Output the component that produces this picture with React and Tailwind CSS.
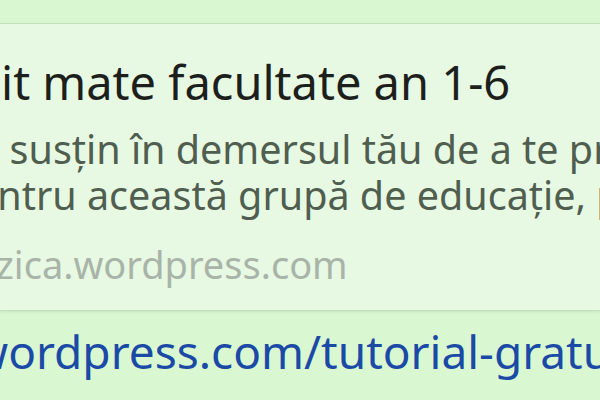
import React from "react";

function LinkPreview() {
  return (
    <div className="border-y border-[#c2dfbc] bg-[#e7f8e3] shadow-[0_1px_2px_rgba(0,0,0,0.08)] overflow-hidden">
      <div className="pt-[28px] pb-[24px]">
        <div className="whitespace-nowrap text-[47px] leading-[60px] text-[#1d1f1d] ml-[1px]">
          it mate facultate an 1-6
        </div>
        <div className="mt-[14px] whitespace-nowrap text-[39.5px] leading-[46px] text-[#4f5e4f] -ml-[23px]">
          e susțin în demersul tău de a te pregăti
        </div>
        <div className="whitespace-nowrap text-[39.5px] leading-[46px] text-[#4f5e4f] -ml-[25px]">
          entru această grupă de educație, pentru
        </div>
        <div className="mt-[24px] whitespace-nowrap text-[38px] leading-[44px] text-[#a9b4a8] -ml-[4px]">
          zica.wordpress.com
        </div>
      </div>
    </div>
  );
}

export default function App() {
  return (
    <div
      className="w-[600px] h-[400px] overflow-hidden bg-[#d9f8d1] flex flex-col"
      style={{ fontFamily: '"Noto Sans", "Open Sans", sans-serif' }}
    >
      <div className="h-[23px] shrink-0" />
      <LinkPreview />
      <div className="pt-[12px] whitespace-nowrap text-[46px] leading-[56px] text-[#1b4aa6] -ml-[28px]">
        <span>wordpress.com/tutorial-gratuit-mate-facultate</span>
      </div>
    </div>
  );
}
